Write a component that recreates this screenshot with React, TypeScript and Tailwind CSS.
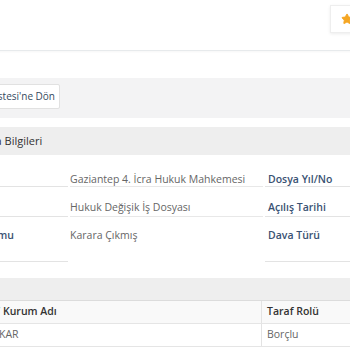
import { Star } from "lucide-react";

const rows = [
  { label: "Mahkeme", value: "Gaziantep 4. İcra Hukuk Mahkemesi", label2: "Dosya Yıl/No", h: "h-[32px]", pt: "pt-[15px]" },
  { label: "Dosya Türü", value: "Hukuk Değişik İş Dosyası", label2: "Açılış Tarihi", h: "h-[30px]", pt: "pt-[11px]" },
  { label: "Dosya Durumu", value: "Karara Çıkmış", label2: "Dava Türü", h: "h-[45px]", pt: "pt-[9px]" },
];

export default function App() {
  return (
    <div className="w-[350px] h-[350px] overflow-hidden bg-white" style={{ fontFamily: "'Open Sans', sans-serif" }}>
      <div className="ml-[-100px] w-[465px]">
        <div className="h-[51px] flex justify-end items-start border-b border-[#e7eaec] shadow-[0_1px_2px_rgba(0,0,0,0.04)]">
          <div className="mt-[5px] mr-[5px] w-[30px] h-[28px] bg-white border border-[#eeeeee] shadow-[0_1px_3px_rgba(0,0,0,0.08)] flex items-center justify-center">
            <Star size={12} className="text-[#f5a623] fill-[#f5a623] ml-[3px]" />
          </div>
        </div>
        <div className="h-[27px]" />
        <div className="h-[40px] bg-[#f3f3f4] flex items-start pt-[6px]">
          <button className="w-[160px] h-[25px] bg-white border border-[#e1e1e1] rounded-[2px] text-[10px] text-[#34495e] flex items-center justify-end pr-[4px] whitespace-nowrap">
            Dosya Listesi'ne Dön
          </button>
        </div>
        <div className="h-[9px]" />
        <div className="h-[28px] bg-[#eeeeee] flex items-center text-[11px] text-[#333]">
          <span className="ml-[76px]">Dava Bilgileri</span>
        </div>
        {rows.map((r, i) => (
          <div key={r.label} className={`flex gap-[2px] ${r.h} text-[10.5px] leading-[18px]`}>
            <div className={`w-[168px] shrink-0 border-b border-[#e3e3e3] font-semibold text-[#3a5273] ${r.pt} pl-[38px] whitespace-nowrap`}>
              {r.label}
            </div>
            <div className={`w-[193px] shrink-0 ${i < 2 ? "border-b border-[#e8e8e8]" : ""} text-[#666] ${r.pt} whitespace-nowrap`}>
              {r.value}
            </div>
            <div className={`flex-1 border-b border-[#e3e3e3] font-semibold text-[#3a5273] ${r.pt} pl-[3px] whitespace-nowrap`}>
              {r.label2}
            </div>
          </div>
        ))}
        <div className="h-[16px]" />
        <div className="h-[23px] bg-[#eeeeee] border-b border-[#dcdcdc]" />
        <div className="flex h-[23px] bg-[#f9f9f9] border-b border-[#e5e5e5] text-[10.5px] font-semibold text-[#333]">
          <div className="w-[362px] shrink-0 border-r border-[#e3e3e3] flex items-center whitespace-nowrap">
            <span className="inline-block w-[100px] text-right">Kişi /</span>
            <span className="pl-[3px]">Kurum Adı</span>
          </div>
          <div className="flex-1 flex items-center pl-[5px]">Taraf Rolü</div>
        </div>
        <div className="flex h-[23px] border-b border-[#e5e5e5] text-[10.5px] text-[#666]">
          <div className="w-[362px] shrink-0 border-r border-[#e3e3e3] flex items-center whitespace-nowrap">
            <span className="inline-block w-[99px] text-right pr-[3px]">ABDULLAH</span>
            <span>KAR</span>
          </div>
          <div className="flex-1 flex items-center pl-[5px]">Borçlu</div>
        </div>
      </div>
    </div>
  );
}
